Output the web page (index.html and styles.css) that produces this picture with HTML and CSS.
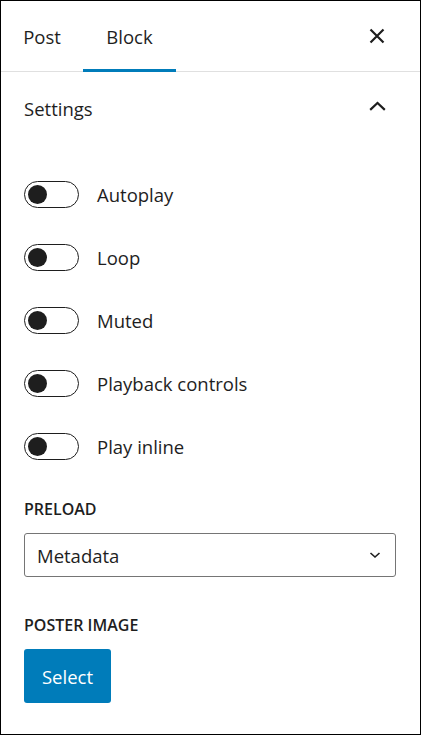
FILE: index.html
```html
<!DOCTYPE html>
<html>
<head>
<meta charset="utf-8">
<link rel="stylesheet" href="styles.css">
</head>
<body>
<div class="sidebar">
  <div class="header">
    <div class="tabs">
      <div class="tab tab-post">Post</div>
      <div class="tab tab-block active">Block</div>
    </div>
    <button class="close" aria-label="Close">
      <svg width="24" height="24" viewBox="0 0 24 24"><path d="M5.5 5.5 L18.5 18.5 M18.5 5.5 L5.5 18.5" stroke="#1e1e1e" stroke-width="2.2" fill="none"/></svg>
    </button>
  </div>
  <div class="panel-title">
    <span>Settings</span>
    <svg width="27" height="27" viewBox="0 0 24 24"><path d="M5.5 15 L12 8.8 L18.5 15" stroke="#1e1e1e" stroke-width="1.9" fill="none"/></svg>
  </div>
  <div class="panel-body">
    <div class="toggles">
      <div class="toggle-row"><span class="toggle"><span class="knob"></span></span><span class="label">Autoplay</span></div>
      <div class="toggle-row"><span class="toggle"><span class="knob"></span></span><span class="label">Loop</span></div>
      <div class="toggle-row"><span class="toggle"><span class="knob"></span></span><span class="label">Muted</span></div>
      <div class="toggle-row"><span class="toggle"><span class="knob"></span></span><span class="label">Playback controls</span></div>
      <div class="toggle-row"><span class="toggle"><span class="knob"></span></span><span class="label">Play inline</span></div>
    </div>
    <div class="field preload">
      <div class="cap-label">PRELOAD</div>
      <div class="select">
        <span>Metadata</span>
        <svg width="16" height="16" viewBox="0 0 16 16"><path d="M3.5 6 L8 10 L12.5 6" stroke="#1e1e1e" stroke-width="1.6" fill="none"/></svg>
      </div>
    </div>
    <div class="field poster">
      <div class="cap-label">POSTER IMAGE</div>
      <div><button class="btn">Select</button></div>
    </div>
  </div>
</div>
</body>
</html>
```
FILE: styles.css
```css
* { box-sizing: border-box; }
html, body { margin: 0; padding: 0; background: #fff; }
body {
  font-family: "Open Sans", "Noto Sans", sans-serif;
  color: #1e1e1e;
}
.sidebar {
  width: 421px;
  height: 735px;
  border: 1px solid #000;
  display: flex;
  flex-direction: column;
  overflow: hidden;
}
.header {
  height: 71px;
  border-bottom: 1px solid #e0e0e0;
  display: flex;
  align-items: stretch;
  justify-content: space-between;
  flex-shrink: 0;
}
.tabs { display: flex; align-items: stretch; }
.tab {
  display: flex;
  align-items: center;
  justify-content: center;
  font-size: 18.5px;
  font-weight: 500;
  position: relative;
}
.tab-post { width: 82px; }
.tab-block { width: 93px; }
.tab.active::after {
  content: "";
  position: absolute;
  left: 0; right: 0; bottom: -1px;
  height: 3px;
  background: #007cba;
}
.close {
  border: 0;
  background: none;
  padding: 0;
  width: 72px;
  margin-right: 7px;
  display: flex;
  align-items: center;
  justify-content: center;
}
.panel-title {
  height: 72px;
  flex-shrink: 0;
  display: flex;
  align-items: center;
  justify-content: space-between;
  padding: 0 29px 0 23px;
  font-size: 18.5px;
  font-weight: 500;
}
.panel-title svg { margin-top: -3px; }
.panel-body {
  padding: 37px 24px 0 23px;
  display: flex;
  flex-direction: column;
}
.toggles { display: flex; flex-direction: column; gap: 36px; }
.toggle-row { display: flex; align-items: center; height: 27px; gap: 18px; }
.toggle {
  width: 55px;
  height: 27px;
  border: 1.5px solid #1e1e1e;
  border-radius: 14px;
  display: flex;
  align-items: center;
  padding-left: 3px;
  flex-shrink: 0;
}
.knob { width: 19px; height: 19px; border-radius: 50%; background: #1e1e1e; }
.label { font-size: 18.5px; }
.field { display: flex; flex-direction: column; gap: 13px; }
.preload { margin-top: 39px; }
.poster { margin-top: 38px; }
.cap-label {
  font-size: 16px;
  font-weight: 600;
  line-height: 21px;
}
.select {
  height: 44px;
  border: 1px solid #757575;
  border-radius: 3px;
  display: flex;
  align-items: center;
  justify-content: space-between;
  padding: 0 12px 0 12px;
  font-size: 18.5px;
}
.btn {
  height: 54px;
  width: 87px;
  border: 0;
  border-radius: 3px;
  background: #007cba;
  color: #fff;
  font-family: inherit;
  font-size: 18.5px;
}
```
